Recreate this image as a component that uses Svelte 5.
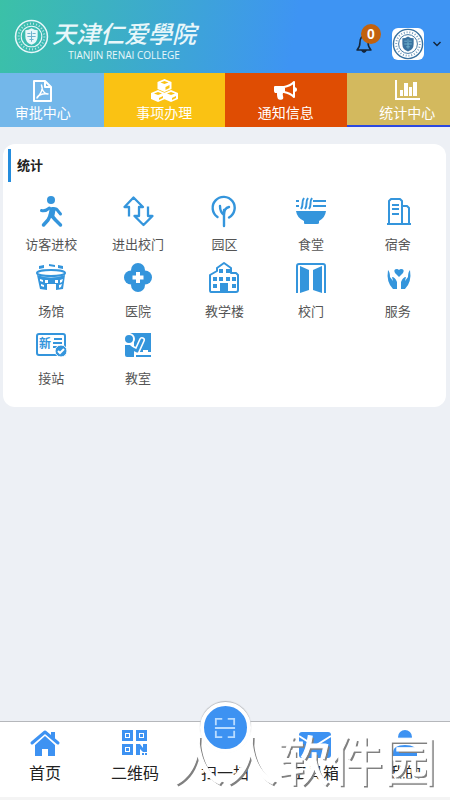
<script>
  const tabs = [
    {
      name: '审批中心',
      color: '#73b7ea',
      icon: `<path fill="none" stroke="currentColor" stroke-width="2" stroke-linejoin="round" d="M5 2h11l6 6v14H5zM16 2v6h6"/>
        <path fill="none" stroke="currentColor" stroke-width="1.500" stroke-linejoin="round" d="M12.500 6c1.500 3 0 8-4.500 13 0-2 5-5 11-4-3 0-6-3-6.500-9z"/>`
    },
    {
      name: '事项办理',
      color: '#fac213',
      icon: `<g fill="currentColor"><path d="M13.500 0l7 3v7l-7 3-7-3V3z"/><path d="M7 11l7 3v6l-7 3-7-3v-6z"/><path d="M20 11l7 3v6l-7 3-7-3v-6z"/></g>
        <g fill="#fac213"><path d="M13.500 2l4 1.500-4 1.500-4-1.500z"/><path d="M7 13l4 1.500L7 16l-4-1.500z"/><path d="M20 13l4 1.500-4 1.500-4-1.500z"/><path d="M14.500 8l4-2v3l-4 2z"/><path d="M8 19l4-2v2l-4 2z"/><path d="M21 19l4-2v2l-4 2z"/></g>`
    },
    {
      name: '通知信息',
      color: '#df4d03',
      icon: `<path fill="currentColor" d="M3 7h9v7h-1c-1 2 1 4 0 6-1 1-4 1-5 0-1-2-1-4-1-6H3q-1-1-1-2V8q0-1 1-1z"/>
        <path fill="none" stroke="currentColor" stroke-width="2" stroke-linejoin="round" d="M12 8q6-1 10-5v15q-4-4-10-5z"/>
        <path fill="currentColor" d="M22 8q3 0 3 2.500T22 13z"/>`
    },
    {
      name: '统计中心',
      color: '#d3b95e',
      active: true,
      icon: `<path fill="currentColor" d="M1 1h2v18h23v2H1zM6 11h3v6H6zM10 4h4v13h-4zM15 8h3v9h-3zM19 3h4v14h-4z"/>`
    }
  ];

  const services = [
    {
      name: '访客进校',
      icon: `<circle cx="15" cy="4" r="4" fill="currentColor"/>
        <g fill="none" stroke="currentColor" stroke-linecap="round" stroke-linejoin="round">
        <path stroke-width="3" d="M5.500 14.500q4 1 8-2.500M17 12.500q4 0 5 2.500l2.500 3"/>
        <path stroke-width="6" d="M16.500 14l-1 5"/>
        <path stroke-width="3.500" d="M14.500 19l-2.500 5-4.500 5M16 20l3.500 4 5 5"/></g>`
    },
    {
      name: '进出校门',
      icon: `<g fill="none" stroke="currentColor" stroke-width="2.300" stroke-linejoin="round"><path d="M6 20.500V11H1.500l9-9.500 9.500 9.500h-4v9h-4.500l9 9 9-9h-4.500v-9.500"/></g>`
    },
    {
      name: '园区',
      icon: `<g fill="none" stroke="currentColor" stroke-width="2.400" stroke-linecap="round"><path d="M8.500 21A11 11 0 1 1 20 21.500M15 30V14M11 10q0 6 4 9M20 11q-5 1-5 8"/></g>`
    },
    {
      name: '食堂',
      icon: `<path fill="currentColor" d="M0 15h30q-1 7-7 10v2q0 1-2 1H9q-1 0-1-1v-2q-7-3-8-10z"/>
        <g fill="none" stroke="currentColor" stroke-width="2"><path d="M17 5h13M17 10h13M0 5h3M0 10h3M8 2c-3 4 0 7-3 11M12 2c-3 4 0 7-3 11M16 2c-3 4 0 7-3 11"/></g>`
    },
    {
      name: '宿舍',
      icon: `<g fill="none" stroke="currentColor" stroke-width="2" stroke-linejoin="round"><path d="M6 28V5l2-2h9l2 2v23M19 10h5l2 2v16M4 28h24M9 9h7M9 13h7M9 18h7"/></g>`
    },
    {
      name: '场馆',
      icon: `<path fill="none" stroke="currentColor" stroke-width="2" d="M1 10c0-4 28-4 28 0s-28 4-28 0z"/>
        <path fill="currentColor" d="M1 12q14 5 28 0l-2 14-7 1v-6H11v6l-7-1zM3 3l5-1v3L3 6zM13 1l6 1v2l-6-1zM22 2l5 1v3l-5-1z"/>
        <path fill="#fff" d="M4 16l3 1v2l-3-1zM9 17h3v3H9zM19 17h3v3h-3zM24 17l3-1-1 3-2 1zM5 21l3 1v2l-3-1zM23 22l3-1-1 3-2 1z"/>`
    },
    {
      name: '医院',
      icon: `<g fill="currentColor"><circle cx="15" cy="7" r="7"/><circle cx="15" cy="22" r="7"/><circle cx="8" cy="14.500" r="7"/><circle cx="22" cy="14.500" r="7"/></g>
        <path stroke="#fff" stroke-width="4" d="M15 9v11M9.500 14.500h11"/>`
    },
    {
      name: '教学楼',
      icon: `<path fill="none" stroke="currentColor" stroke-width="2" stroke-linejoin="round" d="M2 29q-1 0-1-2V12l7-4V5l7-5 7 5v5h5l2 2v15q0 2-2 2z"/>
        <path fill="currentColor" d="M10 6h4v4h-4zM17 6h4v4h-4zM4 14h4v4H4zM10 14h4v4h-4zM17 14h4v4h-4zM23 14h4v4h-4zM4 21h4v4H4zM23 21h4v4h-4zM11 20h8v9h-8z"/>`
    },
    {
      name: '校门',
      icon: `<path fill="none" stroke="currentColor" stroke-width="2" d="M1 30V3q0-2 2-2h24q2 0 2 2v27"/>
        <path fill="currentColor" d="M4 3l9 4v20l-9 3zM26 3l-9 4v20l9 3z"/>`
    },
    {
      name: '服务',
      icon: `<g fill="currentColor"><path d="M16 14l-4-4q-2-4 2-4 1 0 2 1 1-1 2-1 4 0 2 4z"/>
        <path d="M5 7q2 2 2 7l3 4-1-4q3 0 5 5v7h-4q-7-7-5-19z"/><path d="M27 7q-2 2-2 7l-3 4 1-4q-3 0-5 5v7h4q7-7 5-19z"/></g>`
    },
    {
      name: '接站',
      icon: `<rect x="1" y="4" width="28" height="21" rx="2" fill="none" stroke="currentColor" stroke-width="2"/>
        <text x="3" y="18" font-size="12" font-weight="700" fill="currentColor">新</text>
        <path stroke="currentColor" stroke-width="2" d="M18 9h8M17 13h9M17 17h5"/>
        <circle cx="25" cy="21" r="6" fill="currentColor" stroke="#fff"/><path fill="none" stroke="#fff" stroke-width="2" d="M22 21l2 2 4-4"/>`
    },
    {
      name: '教室',
      icon: `<path fill="currentColor" d="M7 3h21v19H11V8z"/>
        <circle cx="6" cy="9" r="5" fill="currentColor" stroke="#fff" stroke-width="2"/>
        <path fill="none" stroke="#fff" stroke-width="6" stroke-linecap="round" stroke-linejoin="round" d="M6 17l8 4 5-11"/>
        <path fill="none" stroke="currentColor" stroke-width="3" stroke-linecap="round" stroke-linejoin="round" d="M6 17l8 4 5-11"/>
        <path fill="currentColor" d="M2 15h5l4 4v8H4q-2 0-2-2z"/>
        <path fill="#fff" d="M20 20h5v2h-5z"/><path stroke="currentColor" stroke-width="2" d="M13 26h15"/>`
    }
  ];

  const home = `<path fill="none" stroke="currentColor" stroke-width="3" stroke-linejoin="round" stroke-linecap="round" d="M3 16L16 5l13 11"/>
    <path fill="currentColor" d="M22 5h4v7l-4-3zM6 18l10-9 10 9v11h-7v-7h-6v7H6z"/>`;
  const qrcode = `<g fill="none" stroke="currentColor" stroke-width="3"><path d="M4.500 4.500h8v8h-8zM18.500 4.500h8v8h-8zM4.500 18.500h8v8h-8z"/></g>
    <path fill="currentColor" d="M7 7h3v3H7zM21 7h3v3h-3zM7 21h3v3H7zM17 17h4l3 4v-4h4v8h-4l-3-3v6h-4zM23 26h2v2h-2zM26 26h2v2h-2z"/>`;
  const toolbox = `<rect x="0" y="5" width="32" height="26" rx="3" fill="currentColor"/><path fill="none" stroke="#fff" stroke-width="2" d="M0 9l16 10L32 9"/>`;
  const user = `<circle cx="16" cy="10" r="7" fill="currentColor"/><path fill="currentColor" d="M4 29v-3q0-8 12-8t12 8v3z"/>`;

  let current = $state('首页');
</script>

{#snippet crest()}
  <svg viewBox="0 0 34 34" aria-hidden="true">
    <circle cx="17" cy="17" r="15.500" fill="none" stroke="currentColor" stroke-width="1.500" />
    <circle cx="17" cy="17" r="12.500" fill="none" stroke="currentColor" stroke-width="2" stroke-dasharray="1 2" opacity=".7" />
    <circle cx="17" cy="17" r="10" fill="none" stroke="currentColor" />
    <path d="M11 11q3 0 6-2 3 2 6 2v6q0 6-6 8-6-2-6-8z" fill="currentColor" />
    <path d="M13 14h3M18 14h3M13 17h8M15 20h4M17 12v10" class="crest-lines" />
  </svg>
{/snippet}

{#snippet navItem(name, icon)}
  <button type="button" class="nav-item" aria-pressed={current === name} onclick={() => (current = name)}>
    <svg viewBox="0 0 32 32" aria-hidden="true">{@html icon}</svg>
    <span>{name}</span>
  </button>
{/snippet}

<div class="page">
  <header>
    <div class="brand">
      <span class="brand-crest">{@render crest()}</span>
      <div class="brand-text">
        <strong>天津仁爱學院</strong>
        <span>TIANJIN RENAI COLLEGE</span>
      </div>
    </div>
    <div class="account">
      <button type="button" class="bell" aria-label="通知">
        <svg viewBox="0 0 20 20" aria-hidden="true">
          <path d="M10 2q-4 1-4 6 0 5-3 8h14q-3-3-3-8 0-5-4-6z" fill="none" stroke="currentColor" stroke-width="1.500" stroke-linejoin="round" />
          <path d="M7 16h6q-1 3-3 3t-3-3z" fill="currentColor" />
        </svg>
        <span class="badge">0</span>
      </button>
      <button type="button" class="profile" aria-label="账户">
        <span class="avatar">{@render crest()}</span>
        <svg class="chevron" viewBox="0 0 10 10" aria-hidden="true">
          <path d="M1.500 3L5 6.500 8.500 3" fill="none" stroke="currentColor" stroke-width="1.500" />
        </svg>
      </button>
    </div>
  </header>

  <nav class="tabs">
    {#each tabs as tab (tab.name)}
      <button type="button" class="tab" class:active={tab.active} style="background: {tab.color}">
        <svg viewBox="0 0 27 24" aria-hidden="true">{@html tab.icon}</svg>
        <span>{tab.name}</span>
      </button>
    {/each}
  </nav>

  <main>
    <section class="card">
      <h2>统计</h2>
      <div class="grid">
        {#each services as item (item.name)}
          <button type="button" class="service">
            <svg viewBox="0 0 30 30" aria-hidden="true">{@html item.icon}</svg>
            <span>{item.name}</span>
          </button>
        {/each}
      </div>
    </section>
  </main>

  <nav class="bottom">
    {@render navItem('首页', home)}
    {@render navItem('二维码', qrcode)}
    <button type="button" class="nav-item scan">
      <span class="scan-circle">
        <svg viewBox="0 0 24 24" aria-hidden="true">
          <path d="M9 2H2v7M15 2h7v7M9 22H2v-7M15 22h7v-7M1 12h22" fill="none" stroke="currentColor" stroke-width="2" />
        </svg>
      </span>
      <span>扫一扫</span>
    </button>
    {@render navItem('工具箱', toolbox)}
    {@render navItem('我的', user)}
    <div class="watermark">人人软件园</div>
  </nav>
</div>

<style>
  :global(body) {
    background: #edf0f5;
  }
  .page {
    display: flex;
    flex-direction: column;
    min-height: 100vh;
    overflow: hidden;
    font-family: 'Liberation Sans', 'Noto Sans CJK SC', sans-serif;
    color: #222;
  }
  button {
    padding: 0;
    border: 0;
    background: none;
    color: inherit;
    font: inherit;
    cursor: pointer;
  }
  svg {
    display: block;
    overflow: visible;
  }
  header {
    display: flex;
    justify-content: space-between;
    align-items: center;
    box-sizing: border-box;
    height: 73px;
    padding: 0 8px 0 14px;
    background: linear-gradient(100deg, #3bc1a7, #3e94f3 65%);
  }
  .brand {
    display: flex;
    align-items: center;
    gap: 3px;
    color: #e8f7fa;
  }
  .brand-crest {
    width: 35px;
  }
  .brand-text {
    display: flex;
    flex-direction: column;
    align-items: center;
    padding-top: 8px;
  }
  .brand-text strong {
    font-size: 24px;
    font-style: italic;
    font-weight: 500;
    line-height: 28px;
  }
  .brand-text span {
    font-family: 'Open Sans', sans-serif;
    font-size: 10px;
    line-height: 12px;
  }
  .crest-lines {
    fill: none;
    stroke: #6fb2ce;
  }
  .account {
    display: flex;
    align-items: center;
    gap: 18px;
    padding-top: 14px;
    color: #14263c;
  }
  .bell {
    position: relative;
    width: 20px;
  }
  .badge {
    position: absolute;
    top: -10px;
    right: -7px;
    width: 20px;
    border-radius: 50%;
    background: #c2620e;
    color: #fff;
    font-size: 14px;
    font-weight: 700;
    line-height: 20px;
  }
  .profile {
    display: flex;
    align-items: center;
    gap: 8px;
  }
  .avatar {
    width: 32px;
    border-radius: 6px;
    background: #fff;
    color: #39719f;
  }
  .chevron {
    width: 10px;
  }
  .tabs {
    display: flex;
    justify-content: center;
  }
  .tab {
    display: flex;
    flex: 0 0 27%;
    flex-direction: column;
    align-items: center;
    box-sizing: border-box;
    height: 54px;
    padding-top: 6px;
    color: #fff;
    font-size: 14px;
    line-height: 20px;
  }
  .tab.active {
    border-bottom: 2px solid #2c48df;
  }
  .tab svg {
    width: 27px;
    height: 24px;
  }
  main {
    flex: 1;
    padding: 17px 4px 17px 3px;
  }
  .card {
    padding: 5px 5px 18px;
    border-radius: 12px;
    background: #fff;
  }
  h2 {
    margin: 0 0 14px;
    padding-left: 6px;
    border-left: 3px solid #258ddd;
    font-size: 13px;
    line-height: 33px;
  }
  .grid {
    display: grid;
    grid-template-columns: repeat(5, 1fr);
    row-gap: 8px;
  }
  .service {
    display: flex;
    flex-direction: column;
    align-items: center;
    gap: 9px;
    color: #555;
    font-size: 13px;
    line-height: 20px;
  }
  .service svg {
    width: 30px;
    height: 30px;
    color: #3495dc;
  }
  .bottom {
    position: relative;
    display: grid;
    grid-template-columns: repeat(5, 1fr);
    border-top: 1px solid #b5b7bb;
    border-bottom: 3px solid #f4f4f4;
    background: #fff;
  }
  .nav-item {
    display: flex;
    flex-direction: column;
    align-items: center;
    gap: 4px;
    padding: 5px 0 12px;
    font-size: 16px;
    line-height: 22px;
  }
  .nav-item svg {
    width: 32px;
    height: 32px;
    color: #3d92f2;
  }
  .scan {
    gap: 10px;
    margin-top: -20px;
    padding-top: 0;
  }
  .scan-circle {
    display: grid;
    place-items: center;
    width: 43px;
    height: 43px;
    border: 4px solid #fff;
    border-radius: 50%;
    background: #3d92f2;
    box-shadow: 0 -1px 1px #b5b7bb;
  }
  .nav-item .scan-circle svg {
    width: 22px;
    height: 22px;
    color: #b9dcff;
  }
  .watermark {
    position: absolute;
    right: 14px;
    bottom: 4px;
    color: #fff;
    font-size: 53px;
    line-height: 60px;
    text-shadow: 2px 2px 0 #808080;
    -webkit-text-stroke: 1px #fff;
    white-space: nowrap;
    pointer-events: none;
  }
</style>
